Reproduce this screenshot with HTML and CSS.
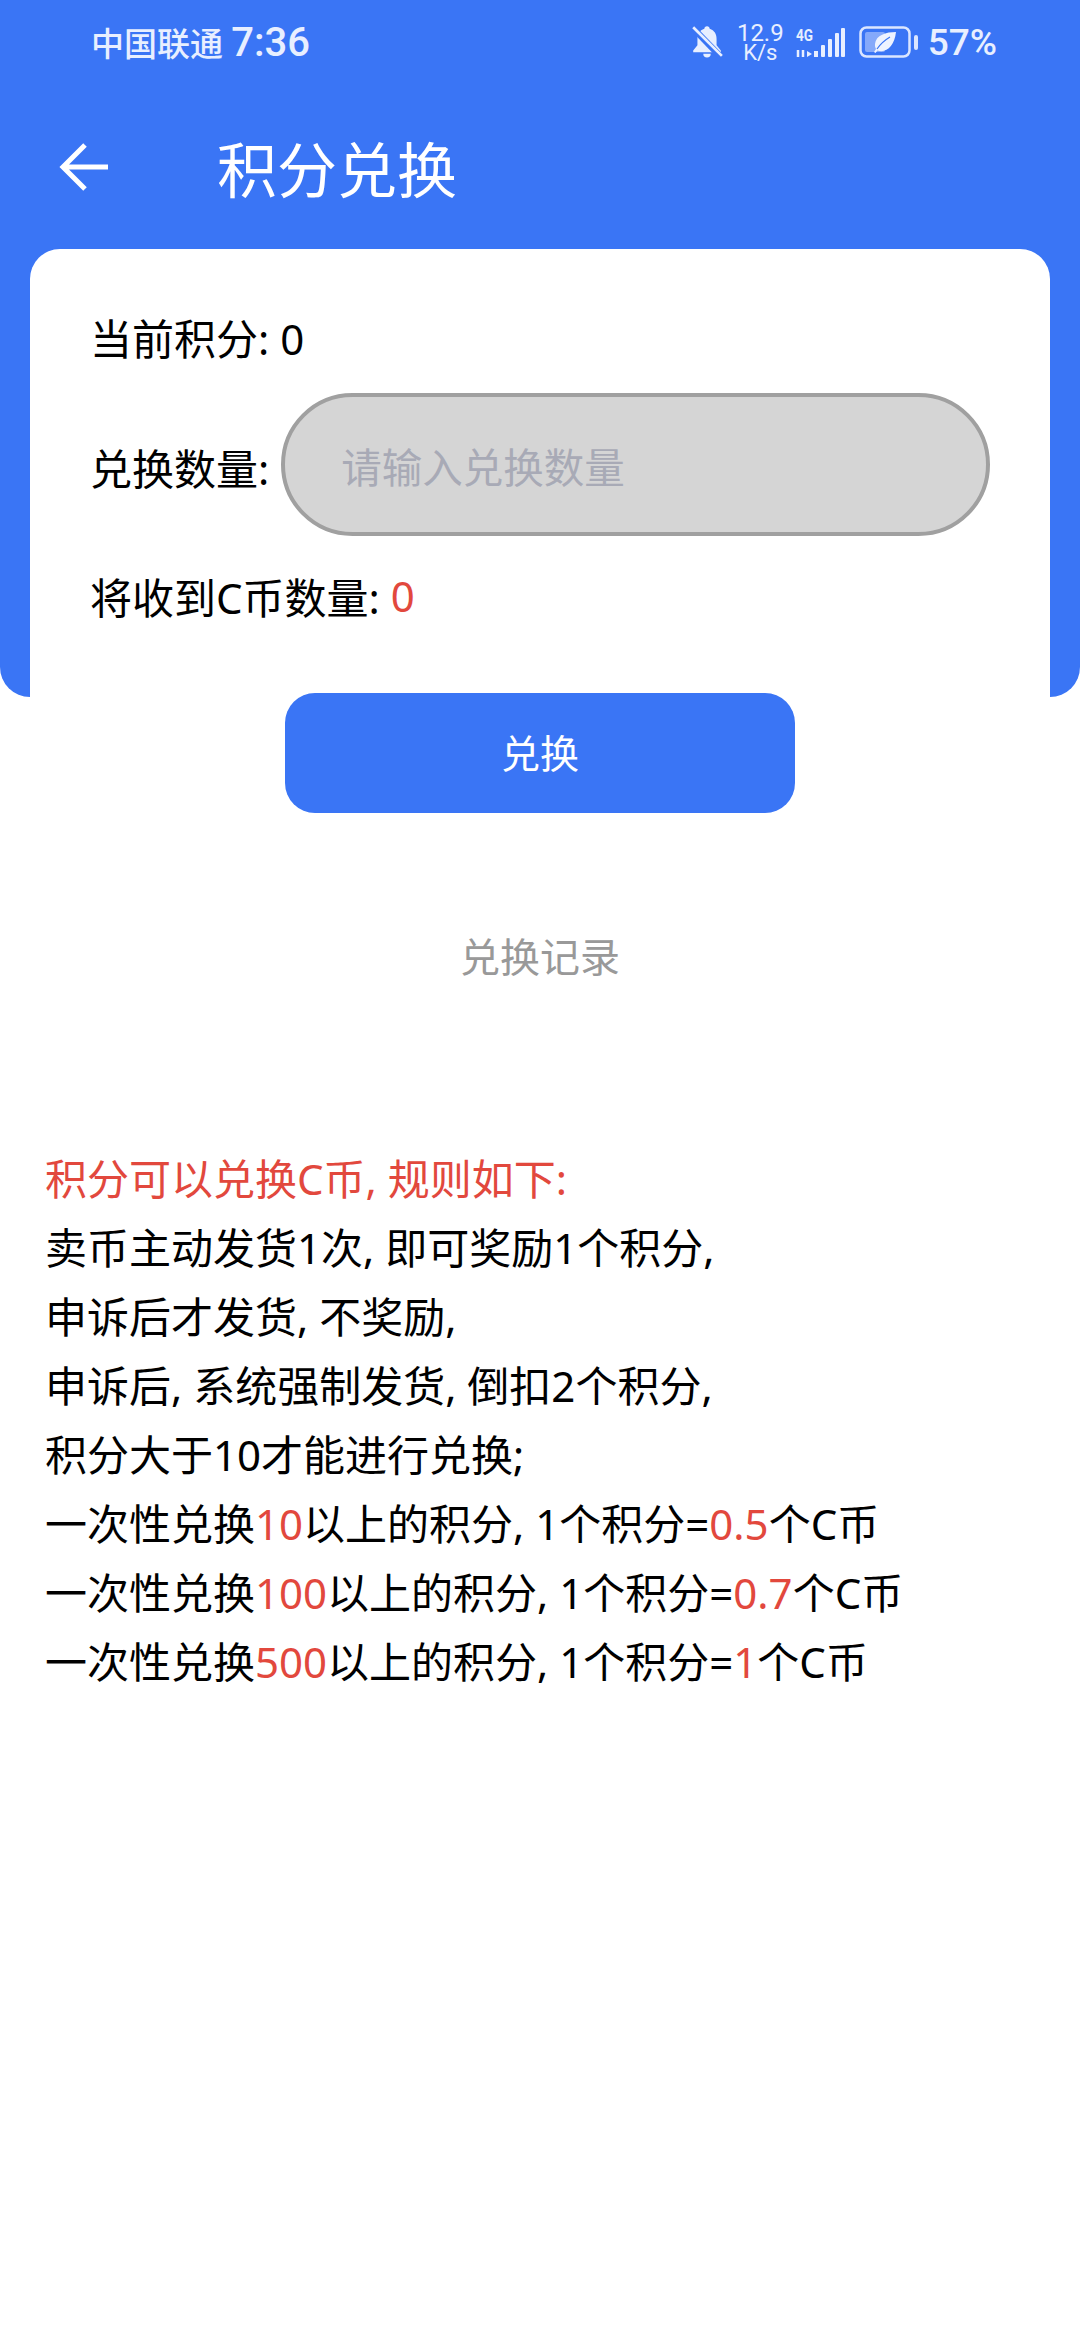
FILE: index.html
```html
<!DOCTYPE html>
<html lang="zh-CN">
<head>
	<meta charset="UTF-8">
	<meta name="viewport" content="width=device-width, initial-scale=1.0">
	<title>积分兑换</title>
	<link rel="stylesheet" href="styles.css">
</head>
<body>
	<div class="header">
		<div class="status">
			<span class="carrier">中国联通 <span class="time">7:36</span></span>
			<div class="status-right">
				<svg class="bell" width="32" height="34" viewBox="0 0 30 32">
					<path d="M15 2c-1.500 0-2.500 1-2.500 2.500C8 6 6 9.500 6 14v6l-4 5v1.500h26V25l-4-5v-6c0-4.500-2-8-6.500-9.500C17.500 3 16.500 2 15 2z" fill="#e8efff"/>
					<path d="M11.500 28h7a3.500 3.500 0 0 1-7 0z" fill="#e8efff"/>
					<path d="M1 3l27 28" stroke="#3a75f5" stroke-width="6"/>
					<path d="M2 3l27 27" stroke="#e8efff" stroke-width="2.500"/>
				</svg>
				<div class="speed"><span class="speed-num">12.9</span><span class="speed-unit">K/s</span></div>
				<svg class="signal" width="52" height="36" viewBox="0 -4 52 36">
					<text x="1" y="14" class="net" textLength="17" lengthAdjust="spacingAndGlyphs">4G</text>
					<path d="M3 23v7M8 23v7" stroke="#e8efff" stroke-width="2.500"/>
					<path d="M12 24l5 3-5 3z" fill="#e8efff"/>
					<rect x="19" y="24" width="4" height="6" fill="#e8efff"/>
					<rect x="26" y="18" width="4" height="12" rx="1" fill="#e8efff"/>
					<rect x="33" y="12" width="4" height="18" rx="1" fill="#e8efff"/>
					<rect x="40" y="6" width="4" height="24" rx="1" fill="#e8efff"/>
					<rect x="46" y="1" width="4" height="29" rx="1" fill="#e8efff"/>
				</svg>
				<svg class="battery" width="60" height="32" viewBox="0 0 60 32">
					<rect x="1.500" y="1.500" width="49" height="29" rx="6" fill="none" stroke="#dbe6ff" stroke-width="2.500"/>
					<rect x="6" y="6" width="20" height="20" rx="2" fill="#85a9fa"/>
					<path d="M37 6c-10 0-20 3-21 12-.2 2 .2 3.500 1 5l-2 3 1.500 1 2-2.500c9 3 17-5 18.500-18.500z" fill="#eef3ff"/>
					<path d="M18 23c4-6 8-9 13-12" fill="none" stroke="#3a75f5" stroke-width="1.200"/>
					<rect x="55" y="9" width="4" height="15" rx="2" fill="#dbe6ff"/>
				</svg>
				<span class="pct">57%</span>
			</div>
		</div>
		<div class="titlebar">
			<svg width="50" height="50" viewBox="0 0 50 50">
				<path d="M49 25H4M26 3L4 25l22 22" fill="none" stroke="#fff" stroke-width="5"/>
			</svg>
			<h1>积分兑换</h1>
		</div>
	</div>

	<div class="card">
		<div class="row">当前积分: 0</div>
		<div class="row row-input">
			<label>兑换数量:</label>
			<input type="text" placeholder="请输入兑换数量">
		</div>
		<div class="row">将收到C币数量: <span class="red">0</span></div>
	</div>

	<div class="btn">兑换</div>
	<div class="history">兑换记录</div>

	<div class="rules">
		<div class="red">积分可以兑换C币, 规则如下:</div>
		<div>卖币主动发货1次, 即可奖励1个积分,</div>
		<div>申诉后才发货, 不奖励,</div>
		<div>申诉后, 系统强制发货, 倒扣2个积分,</div>
		<div>积分大于10才能进行兑换;</div>
		<div>一次性兑换<span class="red">10</span>以上的积分, 1个积分=<span class="red">0.5</span>个C币</div>
		<div>一次性兑换<span class="red">100</span>以上的积分, 1个积分=<span class="red">0.7</span>个C币</div>
		<div>一次性兑换<span class="red">500</span>以上的积分, 1个积分=<span class="red">1</span>个C币</div>
	</div>
</body>
</html>
```

FILE: styles.css
```css
:root{
	--blue: #3a75f5;
	--red: #e2483d;
}
html,body{
	margin:0;
	background:#fff;
	color:#000;
	font-family:"Noto Sans","Noto Sans CJK SC",sans-serif;
}
.header{
	height:697px;
	background:var(--blue);
	border-radius:0 0 30px 30px;
	color:#fff;
}
.status{
	display:flex;
	justify-content:space-between;
	align-items:center;
	height:84px;
	padding:0 83px 0 91px;
}
.carrier{
	font-size:33px;
	font-weight:500;
	color:#e8efff;
	font-family:Roboto,"Noto Sans CJK SC",sans-serif;
}
.time{
	font-size:40px;
}
.status-right{
	display:flex;
	align-items:center;
	color:#e8efff;
	font-family:Roboto,sans-serif;
}
.bell{margin:0 14px 2px 0;}
.speed{
	display:flex;
	flex-direction:column;
	align-items:center;
	line-height:19px;
	margin:2px 11px 0 0;
}
.speed-num{font-size:24px;}
.speed-unit{font-size:22px;}
.signal{margin:0 12px 2px 0;}
.net{
	font-size:17px;
	font-weight:700;
	fill:#e8efff;
}
.battery{margin:0 9px 1px 0;}
.pct{font-size:37px;font-weight:500;}
.titlebar{
	display:flex;
	align-items:center;
	height:166px;
	padding-left:59px;
}
.titlebar h1{
	margin:0 0 0 108px;
	font-size:60px;
	font-weight:400;
}
.card{
	position:relative;
	margin:-448px 30px 0;
	height:448px;
	padding:56px 60px 0 60px;
	background:#fff;
	border-radius:30px 30px 0 0;
	box-sizing:border-box;
	font-size:42px;
}
.row{
	display:flex;
	align-items:center;
	white-space:pre;
	height:62px;
}
.row-input{
	height:143px;
	margin:26px 0 28px;
}
.row-input label{margin-right:12px;padding-top:3px;}
.row-input input{
	flex:1;
	min-width:0;
	height:143px;
	box-sizing:border-box;
	padding:6px 0 0 56px;
	background:#d5d5d5;
	border:4px solid #a0a0a0;
	border-radius:72px;
	font:40.500px "Noto Sans","Noto Sans CJK SC",sans-serif;
	outline:none;
}
.row-input input::placeholder{color:#a8aab6;opacity:1;}
.red{color:var(--red);}
.btn{
	position:relative;
	width:510px;
	height:120px;
	margin:-4px auto 0;
	background:var(--blue);
	border-radius:30px;
	color:#fff;
	font-size:39px;
	line-height:120px;
	text-align:center;
}
.history{
	margin-top:115px;
	color:#999;
	font-size:40px;
	line-height:58px;
	text-align:center;
}
.rules{
	margin-top:158px;
	padding-left:45px;
	font-size:42px;
	line-height:69px;
}
```
